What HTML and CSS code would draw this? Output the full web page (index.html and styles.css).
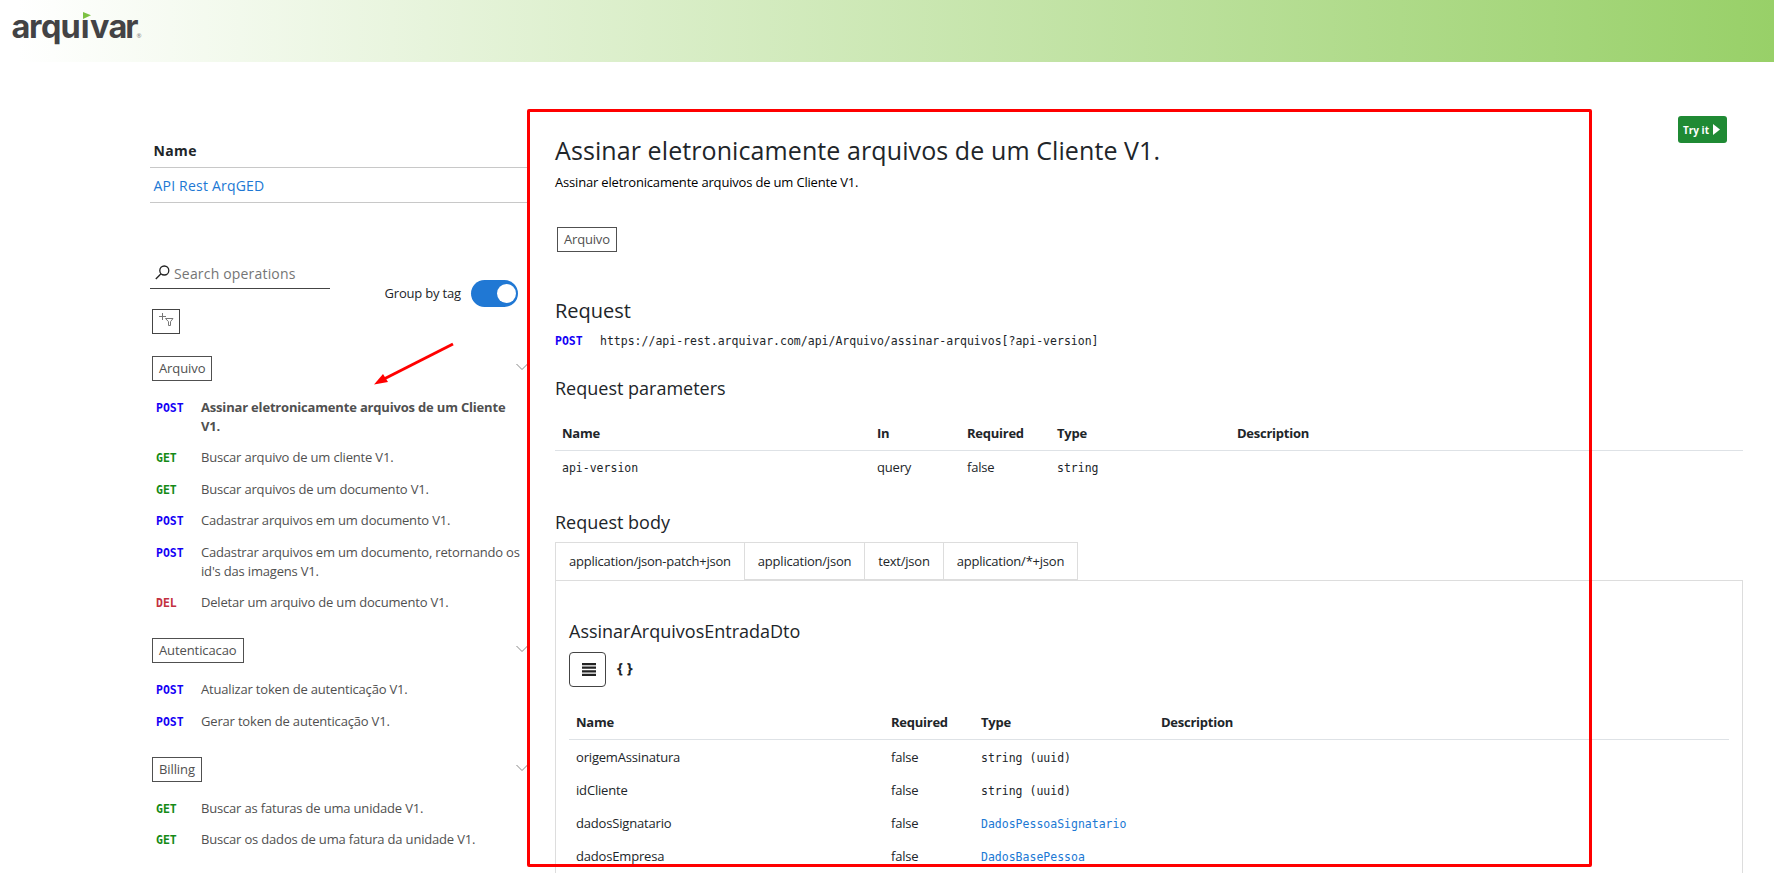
FILE: index.html
```html
<!DOCTYPE html>
<html lang="pt-BR">
<head>
<meta charset="utf-8">
<title>Arquivar API</title>
<link rel="stylesheet" href="styles.css">
</head>
<body>
<header class="topbar">
  <svg class="logo" width="150" height="62" viewBox="0 0 150 62">
    <text class="logo-text" x="11.5 29 41 60.500 80.800 90 108.500 125.300" y="38">arquıvar</text>
    <path d="M83 12l8 3.300-8 3.700z" fill="#7cc142"/>
    <text class="logo-reg" x="136.500" y="38">®</text>
  </svg>
</header>
<div class="layout">
  <aside class="side">
    <div class="api-head">Name</div>
    <div class="api-row"><a class="link">API Rest ArqGED</a></div>
    <div class="search-row">
      <div class="search">
        <svg width="15" height="15" viewBox="0 0 15 15" fill="none" stroke="#222" stroke-width="1.300"><circle cx="9.300" cy="5.500" r="4.500"/><path d="M6 8.700L.8 14"/></svg>
        <span>Search operations</span>
      </div>
      <div class="group"><span>Group by tag</span><span class="toggle"><i class="knob"></i></span></div>
    </div>
    <div class="filter">
      <svg width="16" height="16" viewBox="0 0 16 16" fill="none" stroke="#777" stroke-width="1"><path d="M3.500 0v7M0 3.500h7"/><path d="M6.500 5.500h7.500L11.500 8.700v3.800h-2V8.700z"/></svg>
    </div>
    <section class="tag-group g1">
      <div class="tag-head"><span class="tag">Arquivo</span><svg class="chev" width="12" height="8" viewBox="0 0 12 8" fill="none" stroke="#888"><path d="M.5 1l5.500 5.500L11.500 1"/></svg></div>
      <div class="ops">
        <div class="op active"><b class="m post">POST</b><span>Assinar eletronicamente arquivos de um Cliente V1.</span></div>
        <div class="op"><b class="m get">GET</b><span>Buscar arquivo de um cliente V1.</span></div>
        <div class="op"><b class="m get">GET</b><span>Buscar arquivos de um documento V1.</span></div>
        <div class="op"><b class="m post">POST</b><span>Cadastrar arquivos em um documento V1.</span></div>
        <div class="op"><b class="m post">POST</b><span>Cadastrar arquivos em um documento, retornando os id's das imagens V1.</span></div>
        <div class="op"><b class="m del">DEL</b><span>Deletar um arquivo de um documento V1.</span></div>
      </div>
    </section>
    <section class="tag-group g2">
      <div class="tag-head"><span class="tag">Autenticacao</span><svg class="chev" width="12" height="8" viewBox="0 0 12 8" fill="none" stroke="#888"><path d="M.5 1l5.500 5.500L11.500 1"/></svg></div>
      <div class="ops">
        <div class="op"><b class="m post">POST</b><span>Atualizar token de autenticação V1.</span></div>
        <div class="op"><b class="m post">POST</b><span>Gerar token de autenticação V1.</span></div>
      </div>
    </section>
    <section class="tag-group g3">
      <div class="tag-head"><span class="tag">Billing</span><svg class="chev" width="12" height="8" viewBox="0 0 12 8" fill="none" stroke="#888"><path d="M.5 1l5.500 5.500L11.500 1"/></svg></div>
      <div class="ops">
        <div class="op"><b class="m get">GET</b><span>Buscar as faturas de uma unidade V1.</span></div>
        <div class="op"><b class="m get">GET</b><span>Buscar os dados de uma fatura da unidade V1.</span></div>
      </div>
    </section>
  </aside>
  <main class="detail">
    <div class="title-row">
      <h1>Assinar eletronicamente arquivos de um Cliente V1.</h1>
      <button class="try"><span>Try it</span><svg width="7" height="11" viewBox="0 0 7 11"><path d="M0 0l7 5.500L0 11z" fill="#fff"/></svg></button>
    </div>
    <p class="desc">Assinar eletronicamente arquivos de um Cliente V1.</p>
    <div class="tags"><span class="tag">Arquivo</span></div>
    <h2>Request</h2>
    <div class="url"><b class="m post">POST</b><code>https://api-rest.arquivar.com/api/Arquivo/assinar-arquivos[?api-version]</code></div>
    <h3 class="params-title">Request parameters</h3>
    <div class="grid params head"><span>Name</span><span>In</span><span>Required</span><span>Type</span><span>Description</span></div>
    <div class="grid params"><code>api-version</code><span>query</span><span>false</span><code>string</code></div>
    <h3 class="body-title">Request body</h3>
    <div class="tabs"><span class="tab on">application/json-patch+json</span><span class="tab">application/json</span><span class="tab">text/json</span><span class="tab">application/*+json</span></div>
    <div class="panel">
      <h3>AssinarArquivosEntradaDto</h3>
      <div class="views">
        <span class="view-table"><svg width="14" height="13" viewBox="0 0 14 13" fill="#222"><path d="M0 0h14v2.200H0zM0 3.600h14v2.200H0zM0 7.200h14v2.200H0zM0 10.800h14v2.200H0z"/></svg></span>
        <span class="view-schema">{ }</span>
      </div>
      <div class="grid dto head"><span>Name</span><span>Required</span><span>Type</span><span>Description</span></div>
      <div class="grid dto"><span>origemAssinatura</span><span>false</span><code>string (uuid)</code></div>
      <div class="grid dto"><span>idCliente</span><span>false</span><code>string (uuid)</code></div>
      <div class="grid dto"><span>dadosSignatario</span><span>false</span><code class="link">DadosPessoaSignatario</code></div>
      <div class="grid dto"><span>dadosEmpresa</span><span>false</span><code class="link">DadosBasePessoa</code></div>
    </div>
  </main>
</div>
<div class="highlight"></div>
<svg class="arrow" width="84" height="48" viewBox="0 0 84 48"><path d="M82 3L12 38.500" stroke="#f00" stroke-width="3"/><path d="M3 43.500L12 33l5 8z" fill="#f00"/></svg>
</body>
</html>
```
FILE: styles.css
```css
* { box-sizing: border-box; }
html, body { margin: 0; height: 873px; overflow: hidden; }
body { position: relative; background: #fff; color: #212529; font: 13px/19px "Open Sans", sans-serif; letter-spacing: -0.18px; }
h1, h2, h3, p { margin: 0; font-weight: 400; }
h1, h2, h3 { letter-spacing: 0; }
code { font: 11.5px/21px "DejaVu Sans Mono", monospace; letter-spacing: 0; }
.link { color: #2078d4; }
.topbar { height: 62px; background: linear-gradient(90deg, #fff 1%, #98d068 100%); }
.logo { display: block; }
.logo-text { font: 700 32.5px "Inter", sans-serif; fill: #434345; letter-spacing: 0; }
.logo-reg { font: 6px "Open Sans", sans-serif; fill: #777; }

.layout { display: flex; height: 811px; overflow: hidden; }
.side { width: 378px; margin-left: 150px; padding-top: 78px; flex: none; }
.api-head { height: 28px; padding-left: 3.500px; font-size: 14px; font-weight: 700; line-height: 22px; letter-spacing: 0.35px; border-bottom: 1px solid #c8c8c8; }
.api-row { height: 35px; padding-left: 3.500px; font-size: 14px; line-height: 35px; letter-spacing: 0.2px; border-bottom: 1px solid #c8c8c8; }
.search-row { display: flex; justify-content: space-between; margin-top: 54px; padding-right: 10px; }
.search { display: flex; gap: 4px; width: 180px; height: 32px; padding: 8px 0 0 5px; border-bottom: 1px solid #444; color: #757575; font-size: 14px; letter-spacing: 0.18px; }
.search span { line-height: 17px; }
.group { display: flex; gap: 10px; padding-top: 23px; line-height: 26px; }
.toggle { display: flex; justify-content: flex-end; align-items: center; width: 47px; height: 27px; padding-right: 2px; border-radius: 14px; background: #2078d4; }
.knob { width: 19px; height: 19px; border-radius: 50%; background: #fff; }
.filter { width: 28px; height: 25px; margin: 2px 0 0 2px; padding: 3px 0 0 6px; border: 1px solid #444; }

.g1 { margin-top: 22px; }
.g2 { margin-top: 25.500px; }
.g3 { margin-top: 26px; }
.tag-head { display: flex; justify-content: space-between; padding-left: 2px; }
.tag { height: 25px; padding: 0 6px; border: 1px solid #505050; color: #505050; line-height: 22px; }
.side .tag { letter-spacing: -0.1px; }
.chev { margin-top: 7px; }
.ops { display: flex; flex-direction: column; gap: 12.600px; margin-top: 16.500px; }
.g2 .ops { margin-top: 17.500px; }
.op { display: flex; padding-left: 6px; color: #505050; }
.op span { width: 320px; }
.op.active span { font-weight: 700; letter-spacing: -0.18px; }
.m { flex: none; width: 45px; font: 700 11.5px/20px "DejaVu Sans Mono", monospace; height: 19px; letter-spacing: 0; }
.post { color: #1400f5; }
.get { color: #158a15; }
.del { color: #c3303f; }

.detail { flex: none; width: 1188px; margin-left: 27px; padding-top: 54px; }
.title-row { display: flex; justify-content: space-between; }
h1 { padding-top: 15px; font-size: 25px; line-height: 38px; letter-spacing: 0.09px; }
.try { display: flex; align-items: center; gap: 4px; width: 49px; height: 27px; margin-right: 16px; padding: 0 0 0 5px; border: 0; border-radius: 3px; background: #1f8a34; color: #fff; font: 700 10px "Open Sans", sans-serif; }
.desc { margin-top: 4px; color: #000; }
.tags { display: flex; margin-top: 35px; padding-left: 2px; }
h2 { margin-top: 46px; font-size: 20px; line-height: 26px; }
h3 { font-size: 18px; line-height: 24px; }
.url { display: flex; height: 19px; margin-top: 7px; }
.params-title { margin-top: 26px; }
.body-title { margin-top: 26px; }

.grid { display: grid; height: 33px; padding: 6px 0 0 7px; }
.params { grid-template-columns: 315px 90px 90px 180px 1fr; padding-top: 7px; }
.dto { grid-template-columns: 315px 90px 180px 1fr; padding-top: 8px; }
.head { padding-top: 6px; font-weight: 700; letter-spacing: -0.25px; border-bottom: 1px solid #dee2e6; }
.params.head { margin-top: 18px; }
.dto.head { margin-top: 20px; }
.tabs { display: flex; margin-top: 8px; }
.tab { height: 38px; padding: 0 13px; border: 1px solid #ddd; border-left: 0; line-height: 36px; letter-spacing: -0.22px; }
.tab.on { border-left: 1px solid #ddd; border-bottom: 0; }
.panel { height: 400px; padding: 38px 13px 0; border: 1px solid #ddd; }
.views { display: flex; margin-top: 9px; }
.view-table { display: flex; align-items: center; justify-content: center; width: 37px; height: 35px; padding-left: 2px; border: 1px solid #444; border-radius: 4px; }
.view-schema { padding-left: 11px; font-weight: 700; font-size: 15px; line-height: 30px; letter-spacing: 0; }

.highlight { position: absolute; left: 527px; top: 109px; width: 1065px; height: 758px; border: 3px solid #f00; border-radius: 2px; }
.arrow { position: absolute; left: 371px; top: 341px; }
```
